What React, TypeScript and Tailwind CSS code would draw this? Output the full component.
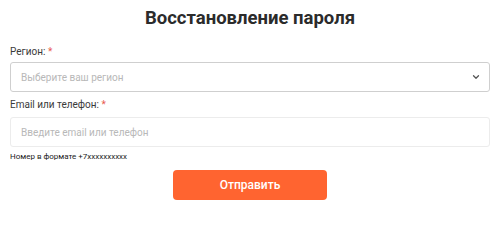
import React from 'react';

const Label = ({ text }: { text: string }) => (
  <div className="text-[10px] leading-[14px] text-[#3a3a3a]">
    {text} <span className="text-[#e85a4f]">*</span>
  </div>
);

const App = () => {
  return (
    <div className="w-[500px] h-[211px] bg-white px-[10px] pt-[6px] font-['Roboto',sans-serif]">
      <h1 className="text-center text-[18.5px] leading-[24px] font-bold text-[#2b2b2b]">
        Восстановление пароля
      </h1>

      <div className="mt-[15px]">
        <Label text="Регион:" />
        <div className="mt-[3px] h-[30px] flex items-center justify-between rounded-[3px] border border-[#cfcfcf] pl-[10px] pr-[8px]">
          <span className="text-[10px] text-[#b8b8b8]">Выберите ваш регион</span>
          <svg width="10" height="10" viewBox="0 0 24 24" fill="none" stroke="#555" strokeWidth="3" strokeLinecap="round" strokeLinejoin="round">
            <path d="M6 9l6 6 6-6" />
          </svg>
        </div>
      </div>

      <div className="mt-[6px]">
        <Label text="Email или телефон:" />
        <div className="mt-[5px] h-[30px] flex items-center rounded-[3px] border border-[#ececec] pl-[10px]">
          <span className="text-[10px] text-[#b8b8b8]">Введите email или телефон</span>
        </div>
        <div className="mt-[5px] text-[8px] leading-[10px] text-[#222]">Номер в формате +7xxxxxxxxxx</div>
      </div>

      <div className="mt-[8px] flex justify-center">
        <button className="w-[154px] h-[30px] rounded-[4px] bg-[#ff6430] text-white text-[12px] font-medium">
          Отправить
        </button>
      </div>
    </div>
  );
};

export default App;
